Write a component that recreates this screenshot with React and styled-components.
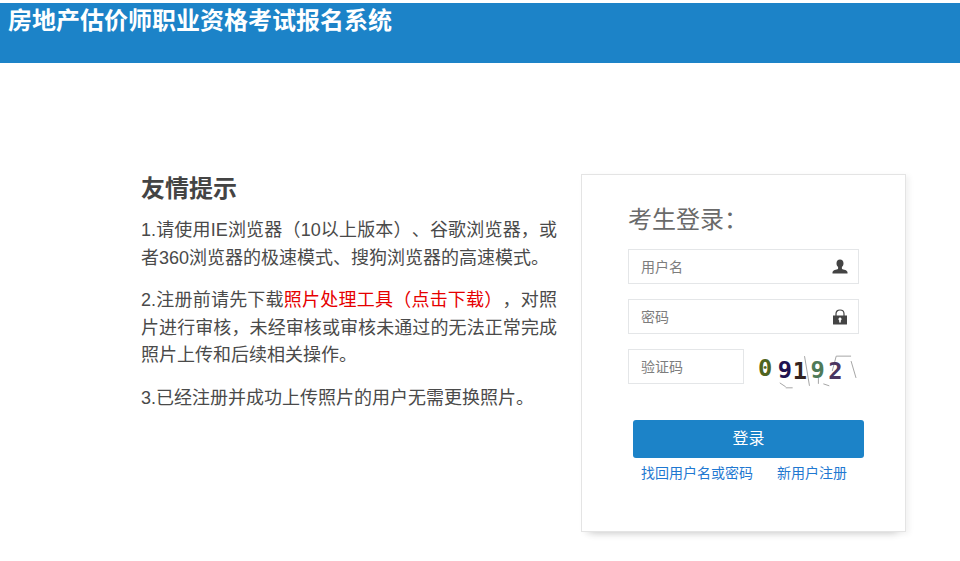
import React from 'react';
import styled, { createGlobalStyle } from 'styled-components';

const GlobalStyle = createGlobalStyle`
    html, body {
        margin: 0;
        padding: 0;
        background: #fff;
        overflow: hidden;
    }
    body {
        font-family: "Liberation Sans", "Noto Sans CJK SC", sans-serif;
        text-spacing-trim: space-all;
    }
`

const Page = styled.div`
    height: 561px;
    padding-top: 3px;
    box-sizing: border-box;
    background: #fff;
`

const Header = styled.header`
    height: 60px;
    background: #1c83c8;
`

const Brand = styled.h1`
    margin: 0;
    padding-left: 8px;
    font-size: 24px;
    line-height: 36px;
    font-weight: 700;
    color: #fff;
`

const Main = styled.main`
    display: flex;
    align-items: flex-start;
    padding: 111px 0 0 141px;
`

const Notice = styled.section`
    width: 416px;
    margin-right: 24px;
    color: #4a4a4a;
`

const NoticeTitle = styled.h2`
    margin: 0 0 14px;
    font-size: 24px;
    line-height: 29px;
    font-weight: 700;
    color: #444;
`

const NoticeText = styled.p`
    margin: 0 0 15px;
    font-size: 18px;
    line-height: 27.5px;
    font-weight: 400;
    text-align: justify;
`

const Red = styled.a`
    color: #e60000;
`

const Card = styled.section`
    width: 325px;
    height: 358px;
    box-sizing: border-box;
    padding: 27px 46px 0 46px;
    background: #fff;
    border: 1px solid #e4e4e4;
    box-shadow: 3px 2px 6px rgba(0, 0, 0, 0.06), 0 10px 8px -9px rgba(0, 0, 0, 0.16);
`

const CardTitle = styled.h3`
    margin: 0 0 11px;
    font-size: 24px;
    line-height: 36px;
    font-weight: 400;
    color: #6a6a6a;
`

const Field = styled.label`
    display: flex;
    align-items: center;
    width: ${p => p.$width || 231}px;
    height: 35px;
    box-sizing: border-box;
    padding: 0 10px 0 12px;
    margin-bottom: 15px;
    border: 1px solid #e4e6e8;
    background: #fff;
`

const Input = styled.input`
    flex: 1;
    min-width: 0;
    border: 0;
    outline: 0;
    padding: 0;
    font-family: inherit;
    font-size: 14px;
    font-weight: 400;
    color: #333;
    &::placeholder {
        color: #7d7d7d;
        opacity: 1;
    }
`

const CaptchaRow = styled.div`
    display: flex;
    align-items: flex-start;
    gap: 12px;
`

const Button = styled.button`
    display: block;
    width: 231px;
    height: 38px;
    margin: 21px 0 0 5px;
    padding: 0 0 4px;
    border: 0;
    border-radius: 3px;
    background: #1c83c8;
    color: #fff;
    font-family: inherit;
    font-size: 16px;
    font-weight: 400;
`

const LinkRow = styled.div`
    display: flex;
    gap: 24px;
    margin: 5px 0 0 13px;
`

const TextLink = styled.a`
    font-size: 14px;
    line-height: 20px;
    font-weight: 400;
    color: #1f78d1;
`

const UserIcon = () => (
    <svg width="16" height="16" viewBox="0 0 16 16">
        <path fill="#444" d="M8 0.5c2.2 0 3.5 1.6 3.5 3.8 0 1.6-.6 3-1.6 3.8v1.3c0 .6 1 1 2.4 1.4 1.5.4 2.7.9 3.2 2.3v1.4H.5v-1.4c.5-1.4 1.7-1.9 3.2-2.3 1.4-.4 2.4-.8 2.4-1.4V8.1c-1-.8-1.6-2.2-1.6-3.8C4.5 2.1 5.8.5 8 .5z" />
    </svg>
)

const LockIcon = () => (
    <svg width="16" height="16" viewBox="0 0 16 16">
        <path fill="none" stroke="#444" strokeWidth="1.2" d="M4 7V4.8C4 2.6 5.7 1 8 1s4 1.6 4 3.8V7" />
        <path fill="#444" fillRule="evenodd" d="M1 6.5h14V15a.5.5 0 0 1-.5.5h-13A.5.5 0 0 1 1 15zM8 8.6a1.5 1.5 0 0 0-.8 2.8V13.5h1.6v-2.1A1.5 1.5 0 0 0 8 8.6z" />
    </svg>
)

const Captcha = () => (
    <svg width="104" height="40" viewBox="0 0 104 40">
        <g stroke="#a5a5a5" strokeWidth="1" fill="none">
            <path d="M81 7h15M81 7l-4 15M96 12l5 17M49 7l5 30M24 34l6 4M30 39h7M68 35l6 2M63 29v6" />
        </g>
        <g fontFamily="'DejaVu Sans Mono', monospace" fontWeight="700" fontSize="24">
            <text x="2" y="27" fill="#4f6420">0</text>
            <text x="22" y="29" fill="#1f1250">9</text>
            <text x="37" y="30" fill="#33231f">1</text>
            <text x="55" y="29" fill="#4f7a58">9</text>
            <text x="73" y="30" fill="#4a3560">2</text>
        </g>
    </svg>
)

const App = () => {
    return (
        <Page>
            <GlobalStyle />
            <Header>
                <Brand>房地产估价师职业资格考试报名系统</Brand>
            </Header>
            <Main>
                <Notice>
                    <NoticeTitle>友情提示</NoticeTitle>
                    <NoticeText>1.请使用IE浏览器（10以上版本）、谷歌浏览器，或者360浏览器的极速模式、搜狗浏览器的高速模式。</NoticeText>
                    <NoticeText>2.注册前请先下载<Red>照片处理工具（点击下载）</Red>，对照片进行审核，未经审核或审核未通过的无法正常完成照片上传和后续相关操作。</NoticeText>
                    <NoticeText>3.已经注册并成功上传照片的用户无需更换照片。</NoticeText>
                </Notice>
                <Card>
                    <CardTitle>考生登录：</CardTitle>
                    <Field>
                        <Input placeholder="用户名" />
                        <UserIcon />
                    </Field>
                    <Field>
                        <Input placeholder="密码" />
                        <LockIcon />
                    </Field>
                    <CaptchaRow>
                        <Field $width={116}>
                            <Input placeholder="验证码" />
                        </Field>
                        <Captcha />
                    </CaptchaRow>
                    <Button>登录</Button>
                    <LinkRow>
                        <TextLink>找回用户名或密码</TextLink>
                        <TextLink>新用户注册</TextLink>
                    </LinkRow>
                </Card>
            </Main>
        </Page>
    );
}

export default App;
